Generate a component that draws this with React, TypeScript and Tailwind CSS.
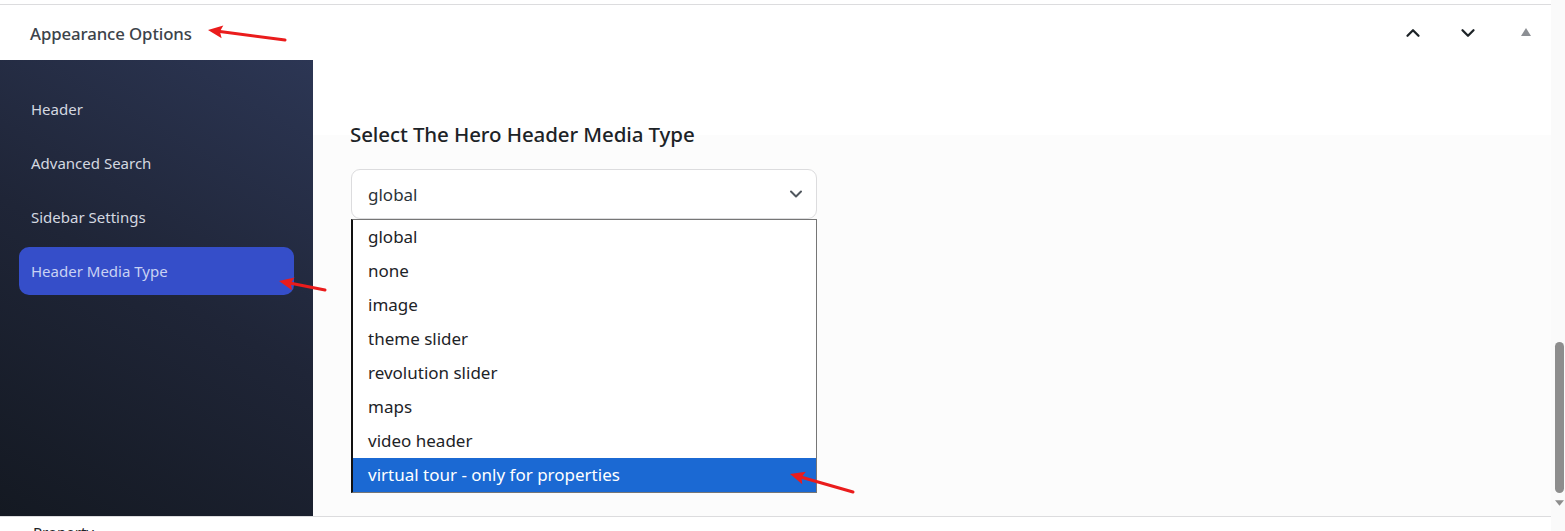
import { ChevronUp, ChevronDown } from 'lucide-react'

const navItems = ['Header', 'Advanced Search', 'Sidebar Settings', 'Header Media Type']

const options = [
  'global',
  'none',
  'image',
  'theme slider',
  'revolution slider',
  'maps',
  'video header',
  'virtual tour - only for properties',
]

// red annotation arrows drawn over the screenshot
function Arrow({ x1, y1, x2, y2 }: { x1: number; y1: number; x2: number; y2: number }) {
  const angle = Math.atan2(y2 - y1, x2 - x1)
  const len = 16
  const spread = 0.42
  const a = [x2 - len * Math.cos(angle - spread), y2 - len * Math.sin(angle - spread)]
  const b = [x2 - len * Math.cos(angle + spread), y2 - len * Math.sin(angle + spread)]
  const mx = x2 - (len - 4) * Math.cos(angle)
  const my = y2 - (len - 4) * Math.sin(angle)
  return (
    <g>
      <line x1={x1} y1={y1} x2={mx} y2={my} stroke="#ea1c1c" strokeWidth={3} strokeLinecap="round" />
      <polygon points={`${x2},${y2} ${a[0]},${a[1]} ${mx},${my} ${b[0]},${b[1]}`} fill="#ea1c1c" />
    </g>
  )
}

export default function App() {
  return (
    <div className="relative w-[1565px] h-[531px] overflow-hidden bg-white flex font-['Noto_Sans',sans-serif]">
      <div className="w-[1551px] flex flex-col">
        <div className="h-[4px] bg-white" />
        {/* Panel header */}
        <div className="h-[56px] border-t border-[#dcdcde] flex items-center justify-between pl-[30px] pr-[20px] bg-white">
          <h2 className="text-[16.8px] font-medium text-[#3c434a] tracking-[-0.1px] mt-[2px]">Appearance Options</h2>
          <div className="flex items-center">
            <ChevronUp className="w-[22px] h-[22px] text-[#1d2327]" strokeWidth={2.5} />
            <ChevronDown className="w-[22px] h-[22px] text-[#1d2327] ml-[33px]" strokeWidth={2.5} />
            <svg viewBox="0 0 10 8" className="w-[10px] h-[8px] ml-[42px] mb-[2px]">
              <polygon points="5,0 10,8 0,8" fill="#8c8f94" />
            </svg>
          </div>
        </div>

        <div className="flex h-[456px]">
          {/* Sidebar */}
          <div className="w-[313px] bg-[linear-gradient(30deg,#141922_0%,#1f2537_50%,#2c3654_100%)] pt-[25px] flex flex-col gap-[6px]">
            {navItems.map((item) => {
              const active = item === 'Header Media Type'
              return (
                <div
                  key={item}
                  className={
                    active
                      ? 'mx-[19px] h-[48px] rounded-[10px] bg-[#354ec9] text-[#c9d2f3] px-[12px] flex items-center text-[15px]'
                      : 'mx-[19px] h-[48px] rounded-[10px] text-[#d4d8e0] px-[12px] flex items-center text-[15px]'
                  }
                >
                  {item}
                </div>
              )
            })}
          </div>

          {/* Content */}
          <div className="flex-1 flex flex-col">
            <div className="h-[75px] bg-white" />
            <div className="flex-1 bg-[#fcfcfc] pl-[37px]">
              <h3 className="text-[20.5px] font-medium text-[#1d2327] leading-[1] -mt-[11px] tracking-[-0.1px]">
                Select The Hero Header Media Type
              </h3>
              <div className="mt-[24px] w-[466px] ml-[1px]">
                <div className="h-[50px] rounded-[9px] border border-[#dcdcde] bg-white flex items-center justify-between pl-[16px] pr-[10px]">
                  <span className="text-[17px] text-[#2c3338] mt-[2px]">global</span>
                  <ChevronDown className="w-[20px] h-[20px] text-[#50575e]" strokeWidth={2.4} />
                </div>
                <div className="border border-[#767676] border-l-2 border-l-[#111] bg-white">
                  {options.map((opt, i) => (
                    <div
                      key={opt}
                      className={
                        i === options.length - 1
                          ? 'h-[34px] flex items-center pl-[15px] pt-[1px] text-[17px] bg-[#1b69d3] text-white'
                          : 'h-[34px] flex items-center pl-[15px] pt-[1px] text-[17px] text-[#1d2327]'
                      }
                    >
                      {opt}
                    </div>
                  ))}
                </div>
              </div>
            </div>
          </div>
        </div>

        <div className="h-[15px] border-t border-[#dcdcde] bg-white pl-[33px]">
          <div className="text-[15px] text-[#1d2327] leading-[1] mt-[8px]">Property</div>
        </div>
      </div>

      {/* Scrollbar track */}
      <div className="w-[14px] bg-[#fafafa] relative">
        <div className="absolute left-[4px] top-[342px] w-[9px] h-[151px] rounded-full bg-[#8d8d8d]" />
        <svg viewBox="0 0 10 6" className="absolute left-[4px] top-[500px] w-[9px] h-[6px]">
          <polygon points="0,0 10,0 5,6" fill="#8d8d8d" />
        </svg>
      </div>

      {/* Annotations */}
      <svg className="absolute inset-0 pointer-events-none" width={1565} height={531}>
        <Arrow x1={285} y1={40} x2={208} y2={30} />
        <Arrow x1={325} y1={290} x2={279} y2={281} />
        <Arrow x1={853} y1={492} x2={790} y2={474} />
      </svg>
    </div>
  )
}
